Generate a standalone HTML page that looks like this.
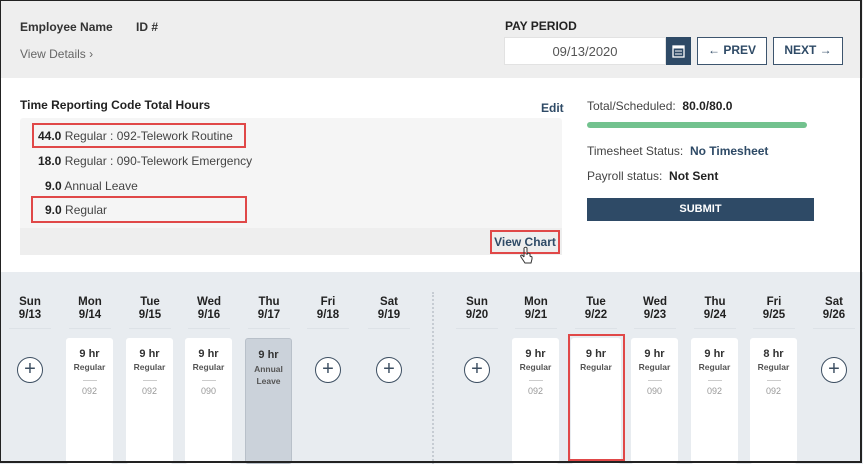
<!DOCTYPE html>
<html><head><meta charset="utf-8"><style>
*{box-sizing:border-box;margin:0;padding:0}
body{width:863px;height:464px;overflow:hidden;font-family:"Liberation Sans",sans-serif;color:#333;background:#fff;position:relative}
.a{position:absolute}
.frame{left:0;top:0;width:862px;height:463px;border:1px solid #222;border-right:2px solid #222;border-bottom:2px solid #222;z-index:10;pointer-events:none}
.b{font-weight:bold}
.rb{border:2px solid #e04848}
.day{width:50px;text-align:center;font-size:11.5px;font-weight:bold;line-height:13px;color:#222;top:296px}
.day:after{content:"";display:block;margin:6px auto 0;width:42px;height:1px;background:#dde2e7}
.card{background:#fff;width:47px;top:338px;height:126px;border-radius:3px;text-align:center;font-size:10px;color:#333}
.card .h{font-weight:bold;font-size:11px;margin-top:10px}
.card .r{font-size:8.5px;font-weight:bold;color:#555;margin-top:2px}
.card .ln{width:14px;height:1px;background:#ccc;margin:8px auto 5px}
.card .c{font-size:9px;color:#999}
.plus{width:26px;height:26px;border:1.5px solid #3d4f62;border-radius:50%;background:#fff;top:357px;text-align:center;line-height:22px;font-size:20px;color:#3d4f62}
.t{font-size:12px;color:#444}
.t b{color:#222}
</style></head><body>
<div class="a frame"></div>
<div class="a" style="left:0;top:0;width:863px;height:78px;background:#eeeeee"></div>
<div class="a b" style="left:20px;top:20px;font-size:12px;color:#333">Employee Name</div>
<div class="a b" style="left:136px;top:20px;font-size:12px;color:#333">ID #</div>
<div class="a" style="left:20px;top:47px;font-size:12px;color:#666">View Details &#x203A;</div>
<div class="a b" style="left:505px;top:19px;font-size:12px;color:#222">PAY PERIOD</div>
<div class="a" style="left:504px;top:37px;width:162px;height:28px;background:#fff;border:1px solid #e2e2e2;text-align:center;line-height:27px;font-size:13px;color:#555">09/13/2020</div>
<div class="a" style="left:666px;top:37px;width:25px;height:28px;background:#2e4a66">
<svg width="25" height="28"><rect x="7" y="9" width="11" height="11" fill="none" stroke="#fff" stroke-width="1.3"/><rect x="7" y="9" width="11" height="2.5" fill="#fff"/><line x1="9" y1="14" x2="16" y2="14" stroke="#fff"/><line x1="9" y1="17" x2="16" y2="17" stroke="#fff"/></svg></div>
<div class="a b" style="left:697px;top:37px;width:70px;height:28px;background:#fff;border:1.5px solid #3d556e;text-align:center;line-height:25px;font-size:12px;color:#2e4a66"><span style="font-weight:normal">&#x2190;</span> PREV</div>
<div class="a b" style="left:773px;top:37px;width:70px;height:28px;background:#fff;border:1.5px solid #3d556e;text-align:center;line-height:25px;font-size:12px;color:#2e4a66">NEXT <span style="font-weight:normal">&#x2192;</span></div>

<div class="a b" style="left:20px;top:98px;font-size:12px;color:#222">Time Reporting Code Total Hours</div>
<div class="a b" style="left:541px;top:101px;font-size:12px;color:#2e4a66">Edit</div>
<div class="a" style="left:20px;top:118px;width:542px;height:137px;background:#f5f5f5;border-radius:3px"></div>
<div class="a" style="left:20px;top:228px;width:542px;height:27px;background:#eeeeee"></div>
<div class="a t" style="left:38px;top:129px"><b>44.0</b> Regular : 092-Telework Routine</div>
<div class="a t" style="left:38px;top:154px"><b>18.0</b> Regular : 090-Telework Emergency</div>
<div class="a t" style="left:45px;top:179px"><b>9.0</b> Annual Leave</div>
<div class="a t" style="left:45px;top:203px"><b>9.0</b> Regular</div>
<div class="a rb" style="left:32px;top:123px;width:214px;height:25px"></div>
<div class="a rb" style="left:31px;top:196px;width:216px;height:27px"></div>
<div class="a rb b" style="left:490px;top:230px;width:70px;height:24px;font-size:12px;color:#2e4a66;text-align:center;line-height:20px">View Chart</div>
<svg class="a" style="left:519px;top:246px" width="14" height="20"><path d="M5 2 v9 M5 2 q1.5-1.5 3 0 v7 M8 9 v-1 q1.5-1.5 3 0 v2 M5 11 l-2-2 q-2 0 -1 2 l4 6 h6 l1-4 v-2 q-1.5-1.5-2 0" fill="#fff" stroke="#333" stroke-width="1"/></svg>

<div class="a t" style="left:587px;top:99px">Total/Scheduled: &nbsp;<b>80.0/80.0</b></div>
<div class="a" style="left:587px;top:122px;width:220px;height:6px;background:#72c28e;border-radius:3px"></div>
<div class="a t" style="left:587px;top:144px">Timesheet Status: &nbsp;<b style="color:#2e4a66">No Timesheet</b></div>
<div class="a t" style="left:587px;top:169px">Payroll status: &nbsp;<b>Not Sent</b></div>
<div class="a b" style="left:587px;top:198px;width:227px;height:23px;background:#2e4a66;color:#fff;font-size:11px;text-align:center;line-height:23px">SUBMIT</div>

<div class="a" style="left:0;top:272px;width:863px;height:192px;background:#e8ecf0"></div>
<div class="a" style="left:432px;top:292px;width:0;height:172px;border-left:2px dotted #c6ccd3"></div>

<div class="a day" style="left:5px">Sun<br>9/13</div>
<div class="a day" style="left:65px">Mon<br>9/14</div>
<div class="a day" style="left:125px">Tue<br>9/15</div>
<div class="a day" style="left:184px">Wed<br>9/16</div>
<div class="a day" style="left:244px">Thu<br>9/17</div>
<div class="a day" style="left:303px">Fri<br>9/18</div>
<div class="a day" style="left:364px">Sat<br>9/19</div>
<div class="a day" style="left:452px">Sun<br>9/20</div>
<div class="a day" style="left:511px">Mon<br>9/21</div>
<div class="a day" style="left:571px">Tue<br>9/22</div>
<div class="a day" style="left:630px">Wed<br>9/23</div>
<div class="a day" style="left:690px">Thu<br>9/24</div>
<div class="a day" style="left:749px">Fri<br>9/25</div>
<div class="a day" style="left:809px">Sat<br>9/26</div>

<div class="a plus" style="left:17px">+</div>
<div class="a card" style="left:66px"><div class="h">9 hr</div><div class="r">Regular</div><div class="ln"></div><div class="c">092</div></div>
<div class="a card" style="left:126px"><div class="h">9 hr</div><div class="r">Regular</div><div class="ln"></div><div class="c">092</div></div>
<div class="a card" style="left:185px"><div class="h">9 hr</div><div class="r">Regular</div><div class="ln"></div><div class="c">090</div></div>
<div class="a card" style="left:245px;background:#cbd2da;border:1px solid #b8c0c9"><div class="h">9 hr</div><div class="r" style="line-height:12px">Annual<br>Leave</div></div>
<div class="a plus" style="left:315px">+</div>
<div class="a plus" style="left:376px">+</div>
<div class="a plus" style="left:464px">+</div>
<div class="a card" style="left:512px"><div class="h">9 hr</div><div class="r">Regular</div><div class="ln"></div><div class="c">092</div></div>
<div class="a card" style="left:571px;width:50px"><div class="h">9 hr</div><div class="r">Regular</div></div>
<div class="a rb" style="left:568px;top:334px;width:57px;height:127px"></div>
<div class="a card" style="left:631px"><div class="h">9 hr</div><div class="r">Regular</div><div class="ln"></div><div class="c">090</div></div>
<div class="a card" style="left:691px"><div class="h">9 hr</div><div class="r">Regular</div><div class="ln"></div><div class="c">092</div></div>
<div class="a card" style="left:750px"><div class="h">8 hr</div><div class="r">Regular</div><div class="ln"></div><div class="c">092</div></div>
<div class="a plus" style="left:821px">+</div>
</body></html>
